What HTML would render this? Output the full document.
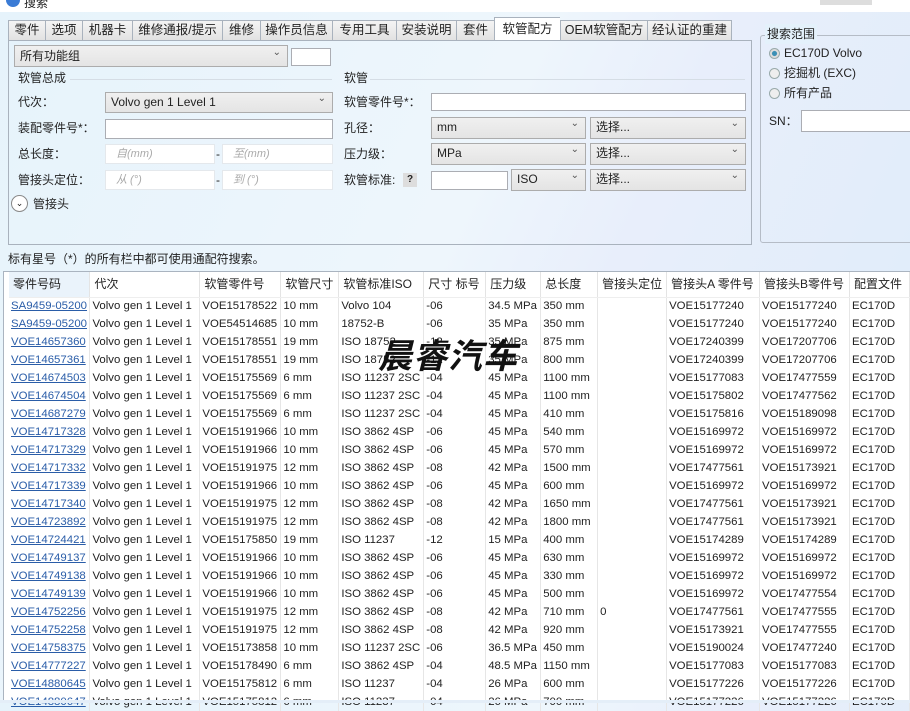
<!DOCTYPE html>
<html><head><meta charset="utf-8"><style>
*{box-sizing:border-box;margin:0;padding:0}
body{width:910px;height:703px;overflow:hidden;font-family:"Liberation Sans","Noto Sans CJK SC",sans-serif;font-size:12px;color:#222;background:linear-gradient(115deg,#e6f3fb 0%,#eef6fc 45%,#e8eefb 60%,#dcecf9 100%);position:relative}
.a{position:absolute}
.top{left:0;top:0;width:910px;height:12px;background:#fff}
.tabs{left:8px;top:20px;height:21px;display:flex}
.tab{height:21px;border:1px solid #a9b2bd;border-right:none;background:linear-gradient(#f4f4f4,#e2e2e2);line-height:19px;font-size:12.5px;white-space:nowrap;text-align:center;overflow:hidden}
.tab.sel{background:#fff;margin-top:-3px;height:24px;line-height:22px;border-bottom:none}
.tab.last{border-right:1px solid #a9b2bd}
.panel{left:8px;top:40px;width:744px;height:205px;border:1px solid #a9b2bd}
.combo{border:1px solid #acacac;background:linear-gradient(#f0f0f0,#e4e4e4);height:20px;line-height:18px;padding-left:5px;font-size:12px}
.combo:after{content:"⌄";position:absolute;right:6px;top:-3px;font-size:10px;color:#555}
.inp{border:1px solid #abadb3;background:#fff;height:20px}
.ph{color:#aaa;font-style:italic;padding-left:10px;line-height:18px;font-size:11px;border-color:#e4e8ec}
.lbl{font-size:12px;line-height:20px}
.grp{left:760px;top:35px;width:160px;height:208px;border:1px solid #b5bcc6;border-radius:3px}
.radio{width:11px;height:11px;border-radius:50%;border:1px solid #9aa;background:#eee}
table{border-collapse:collapse;table-layout:fixed;font-size:11.4px}
td,th{height:18px;line-height:17px;white-space:nowrap;overflow:hidden;padding-left:2px;font-weight:normal;text-align:left;border-right:1px solid #e6e6e6}
th{height:25px;background:#fff;border-right:1px solid #e4e4e4;border-bottom:1px solid #eee;padding-left:4px;font-size:12px}
td:first-child a{color:#2a5da8;text-decoration:underline}
.wm{left:378px;top:329px;font-size:34px;font-weight:bold;font-style:italic;color:#111;letter-spacing:1px;font-family:"Noto Sans CJK SC",sans-serif}
</style></head><body>
<div class="a top"><span class="a" style="left:6px;top:-7px;width:14px;height:14px;border-radius:50%;background:#3a7bd5"></span><span class="a" style="left:24px;top:-6px;font-size:12px">搜索</span><span class="a" style="left:820px;top:0;width:52px;height:5px;background:#ddd"></span></div>
<div class="a tabs"><div class="tab" style="width:37px">零件</div><div class="tab" style="width:37px">选项</div><div class="tab" style="width:50px">机器卡</div><div class="tab" style="width:90px">维修通报/提示</div><div class="tab" style="width:38px">维修</div><div class="tab" style="width:72px">操作员信息</div><div class="tab" style="width:64px">专用工具</div><div class="tab" style="width:60px">安装说明</div><div class="tab" style="width:38px">套件</div><div class="tab sel" style="width:66px">软管配方</div><div class="tab" style="width:87px">OEM软管配方</div><div class="tab last" style="width:85px">经认证的重建</div></div>
<div class="a panel"></div>
<div class="a combo" style="left:14px;top:45px;width:274px;height:22px;line-height:20px">所有功能组</div>
<div class="a inp" style="left:291px;top:48px;width:40px;height:18px"></div>
<div class="a lbl" style="left:18px;top:68px">软管总成</div><div class="a" style="left:70px;top:79px;width:262px;border-top:1px solid #d5dde5"></div>
<div class="a lbl" style="left:344px;top:68px">软管</div><div class="a" style="left:370px;top:79px;width:375px;border-top:1px solid #d5dde5"></div>
<div class="a lbl" style="left:18px;top:92px">代次：</div>
<div class="a combo" style="left:105px;top:92px;width:228px;height:21px">Volvo gen 1 Level 1</div>
<div class="a lbl" style="left:18px;top:118px">装配零件号*：</div>
<div class="a inp" style="left:105px;top:119px;width:228px"></div>
<div class="a lbl" style="left:18px;top:144px">总长度：</div>
<div class="a inp ph" style="left:105px;top:144px;width:110px">自(mm)</div><div class="a lbl" style="left:216px;top:144px">-</div>
<div class="a inp ph" style="left:222px;top:144px;width:111px">至(mm)</div>
<div class="a lbl" style="left:18px;top:170px">管接头定位：</div>
<div class="a inp ph" style="left:105px;top:170px;width:110px">从 (°)</div><div class="a lbl" style="left:216px;top:170px">-</div>
<div class="a inp ph" style="left:222px;top:170px;width:111px">到 (°)</div>
<div class="a" style="left:11px;top:195px;width:17px;height:17px;border:1px solid #888;border-radius:50%;background:#fff;font-size:9px;text-align:center;line-height:15px">⌄</div>
<div class="a lbl" style="left:33px;top:194px">管接头</div>
<div class="a lbl" style="left:344px;top:92px">软管零件号*：</div>
<div class="a inp" style="left:431px;top:93px;width:315px;height:18px"></div>
<div class="a lbl" style="left:344px;top:118px">孔径：</div>
<div class="a combo" style="left:431px;top:117px;width:155px;height:22px">mm</div>
<div class="a combo" style="left:590px;top:117px;width:156px;height:22px">选择...</div>
<div class="a lbl" style="left:344px;top:144px">压力级：</div>
<div class="a combo" style="left:431px;top:143px;width:155px;height:22px">MPa</div>
<div class="a combo" style="left:590px;top:143px;width:156px;height:22px">选择...</div>
<div class="a lbl" style="left:344px;top:170px">软管标准:</div>
<div class="a" style="left:403px;top:173px;width:14px;height:14px;background:#ddd;font-size:10px;font-weight:bold;text-align:center;line-height:14px">?</div>
<div class="a inp" style="left:431px;top:171px;width:77px;height:19px"></div>
<div class="a combo" style="left:511px;top:169px;width:75px;height:22px">ISO</div>
<div class="a combo" style="left:590px;top:169px;width:156px;height:22px">选择...</div>
<div class="a grp"></div>
<div class="a lbl" style="left:765px;top:24px;background:#e4f1fb;padding:0 2px">搜索范围</div>
<div class="a radio" style="left:769px;top:48px;background:radial-gradient(#3a8fb5 35%,#ddd 45%)"></div><div class="a lbl" style="left:784px;top:43px">EC170D Volvo</div>
<div class="a radio" style="left:769px;top:68px"></div><div class="a lbl" style="left:784px;top:63px">挖掘机 (EXC)</div>
<div class="a radio" style="left:769px;top:88px"></div><div class="a lbl" style="left:784px;top:83px">所有产品</div>
<div class="a lbl" style="left:769px;top:111px">SN：</div>
<div class="a inp" style="left:801px;top:110px;width:120px;height:22px"></div>
<div class="a lbl" style="left:8px;top:249px">标有星号（*）的所有栏中都可使用通配符搜索。</div>
<div class="a" style="left:3px;top:271px;width:907px;height:432px;background:#fff;border:1px solid #aab4c0"></div>
<div class="a" style="left:9px;top:272px">
<table>
<colgroup><col style="width:81px"><col style="width:110px"><col style="width:81px"><col style="width:58px"><col style="width:85px"><col style="width:62px"><col style="width:55px"><col style="width:57px"><col style="width:69px"><col style="width:93px"><col style="width:90px"><col style="width:60px"></colgroup>
<tr><th style="background:#eaf3fb">零件号码</th><th>代次</th><th>软管零件号</th><th>软管尺寸</th><th>软管标准ISO</th><th>尺寸 标号</th><th>压力级</th><th>总长度</th><th>管接头定位</th><th>管接头A 零件号</th><th>管接头B零件号</th><th>配置文件</th></tr>
<tr><td><a>SA9459-05200</a></td><td>Volvo gen 1 Level 1</td><td>VOE15178522</td><td>10 mm</td><td>Volvo 104</td><td>-06</td><td>34.5 MPa</td><td>350 mm</td><td></td><td>VOE15177240</td><td>VOE15177240</td><td>EC170D</td></tr>
<tr><td><a>SA9459-05200</a></td><td>Volvo gen 1 Level 1</td><td>VOE54514685</td><td>10 mm</td><td>18752-B</td><td>-06</td><td>35 MPa</td><td>350 mm</td><td></td><td>VOE15177240</td><td>VOE15177240</td><td>EC170D</td></tr>
<tr><td><a>VOE14657360</a></td><td>Volvo gen 1 Level 1</td><td>VOE15178551</td><td>19 mm</td><td>ISO 18752</td><td>-12</td><td>35 MPa</td><td>875 mm</td><td></td><td>VOE17240399</td><td>VOE17207706</td><td>EC170D</td></tr>
<tr><td><a>VOE14657361</a></td><td>Volvo gen 1 Level 1</td><td>VOE15178551</td><td>19 mm</td><td>ISO 18752</td><td>-12</td><td>35 MPa</td><td>800 mm</td><td></td><td>VOE17240399</td><td>VOE17207706</td><td>EC170D</td></tr>
<tr><td><a>VOE14674503</a></td><td>Volvo gen 1 Level 1</td><td>VOE15175569</td><td>6 mm</td><td>ISO 11237 2SC</td><td>-04</td><td>45 MPa</td><td>1100 mm</td><td></td><td>VOE15177083</td><td>VOE17477559</td><td>EC170D</td></tr>
<tr><td><a>VOE14674504</a></td><td>Volvo gen 1 Level 1</td><td>VOE15175569</td><td>6 mm</td><td>ISO 11237 2SC</td><td>-04</td><td>45 MPa</td><td>1100 mm</td><td></td><td>VOE15175802</td><td>VOE17477562</td><td>EC170D</td></tr>
<tr><td><a>VOE14687279</a></td><td>Volvo gen 1 Level 1</td><td>VOE15175569</td><td>6 mm</td><td>ISO 11237 2SC</td><td>-04</td><td>45 MPa</td><td>410 mm</td><td></td><td>VOE15175816</td><td>VOE15189098</td><td>EC170D</td></tr>
<tr><td><a>VOE14717328</a></td><td>Volvo gen 1 Level 1</td><td>VOE15191966</td><td>10 mm</td><td>ISO 3862 4SP</td><td>-06</td><td>45 MPa</td><td>540 mm</td><td></td><td>VOE15169972</td><td>VOE15169972</td><td>EC170D</td></tr>
<tr><td><a>VOE14717329</a></td><td>Volvo gen 1 Level 1</td><td>VOE15191966</td><td>10 mm</td><td>ISO 3862 4SP</td><td>-06</td><td>45 MPa</td><td>570 mm</td><td></td><td>VOE15169972</td><td>VOE15169972</td><td>EC170D</td></tr>
<tr><td><a>VOE14717332</a></td><td>Volvo gen 1 Level 1</td><td>VOE15191975</td><td>12 mm</td><td>ISO 3862 4SP</td><td>-08</td><td>42 MPa</td><td>1500 mm</td><td></td><td>VOE17477561</td><td>VOE15173921</td><td>EC170D</td></tr>
<tr><td><a>VOE14717339</a></td><td>Volvo gen 1 Level 1</td><td>VOE15191966</td><td>10 mm</td><td>ISO 3862 4SP</td><td>-06</td><td>45 MPa</td><td>600 mm</td><td></td><td>VOE15169972</td><td>VOE15169972</td><td>EC170D</td></tr>
<tr><td><a>VOE14717340</a></td><td>Volvo gen 1 Level 1</td><td>VOE15191975</td><td>12 mm</td><td>ISO 3862 4SP</td><td>-08</td><td>42 MPa</td><td>1650 mm</td><td></td><td>VOE17477561</td><td>VOE15173921</td><td>EC170D</td></tr>
<tr><td><a>VOE14723892</a></td><td>Volvo gen 1 Level 1</td><td>VOE15191975</td><td>12 mm</td><td>ISO 3862 4SP</td><td>-08</td><td>42 MPa</td><td>1800 mm</td><td></td><td>VOE17477561</td><td>VOE15173921</td><td>EC170D</td></tr>
<tr><td><a>VOE14724421</a></td><td>Volvo gen 1 Level 1</td><td>VOE15175850</td><td>19 mm</td><td>ISO 11237</td><td>-12</td><td>15 MPa</td><td>400 mm</td><td></td><td>VOE15174289</td><td>VOE15174289</td><td>EC170D</td></tr>
<tr><td><a>VOE14749137</a></td><td>Volvo gen 1 Level 1</td><td>VOE15191966</td><td>10 mm</td><td>ISO 3862 4SP</td><td>-06</td><td>45 MPa</td><td>630 mm</td><td></td><td>VOE15169972</td><td>VOE15169972</td><td>EC170D</td></tr>
<tr><td><a>VOE14749138</a></td><td>Volvo gen 1 Level 1</td><td>VOE15191966</td><td>10 mm</td><td>ISO 3862 4SP</td><td>-06</td><td>45 MPa</td><td>330 mm</td><td></td><td>VOE15169972</td><td>VOE15169972</td><td>EC170D</td></tr>
<tr><td><a>VOE14749139</a></td><td>Volvo gen 1 Level 1</td><td>VOE15191966</td><td>10 mm</td><td>ISO 3862 4SP</td><td>-06</td><td>45 MPa</td><td>500 mm</td><td></td><td>VOE15169972</td><td>VOE17477554</td><td>EC170D</td></tr>
<tr><td><a>VOE14752256</a></td><td>Volvo gen 1 Level 1</td><td>VOE15191975</td><td>12 mm</td><td>ISO 3862 4SP</td><td>-08</td><td>42 MPa</td><td>710 mm</td><td>0</td><td>VOE17477561</td><td>VOE17477555</td><td>EC170D</td></tr>
<tr><td><a>VOE14752258</a></td><td>Volvo gen 1 Level 1</td><td>VOE15191975</td><td>12 mm</td><td>ISO 3862 4SP</td><td>-08</td><td>42 MPa</td><td>920 mm</td><td></td><td>VOE15173921</td><td>VOE17477555</td><td>EC170D</td></tr>
<tr><td><a>VOE14758375</a></td><td>Volvo gen 1 Level 1</td><td>VOE15173858</td><td>10 mm</td><td>ISO 11237 2SC</td><td>-06</td><td>36.5 MPa</td><td>450 mm</td><td></td><td>VOE15190024</td><td>VOE17477240</td><td>EC170D</td></tr>
<tr><td><a>VOE14777227</a></td><td>Volvo gen 1 Level 1</td><td>VOE15178490</td><td>6 mm</td><td>ISO 3862 4SP</td><td>-04</td><td>48.5 MPa</td><td>1150 mm</td><td></td><td>VOE15177083</td><td>VOE15177083</td><td>EC170D</td></tr>
<tr><td><a>VOE14880645</a></td><td>Volvo gen 1 Level 1</td><td>VOE15175812</td><td>6 mm</td><td>ISO 11237</td><td>-04</td><td>26 MPa</td><td>600 mm</td><td></td><td>VOE15177226</td><td>VOE15177226</td><td>EC170D</td></tr>
<tr><td><a>VOE14880647</a></td><td>Volvo gen 1 Level 1</td><td>VOE15175812</td><td>6 mm</td><td>ISO 11237</td><td>-04</td><td>26 MPa</td><td>700 mm</td><td></td><td>VOE15177226</td><td>VOE15177226</td><td>EC170D</td></tr>
</table></div>
<div class="a" style="left:0;top:700px;width:910px;height:3px;background:#e4eef8"></div>
<div class="a wm">晨睿汽车</div>
</body></html>
